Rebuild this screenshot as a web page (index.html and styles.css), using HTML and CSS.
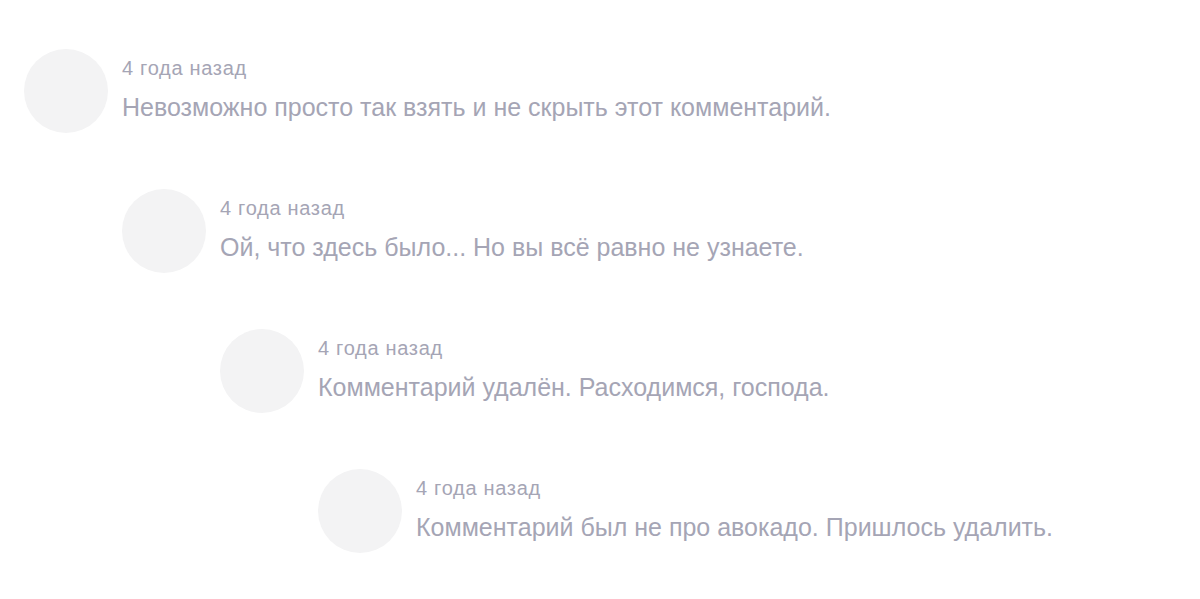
FILE: index.html
```html
<!DOCTYPE html>
<html lang="ru">
<head>
  <meta charset="UTF-8">
  <title>Комментарии</title>
  <link rel="stylesheet" href="styles.css">
</head>
<body>
  <div id="comments">
    <div class="comment level-0">
      <div class="avatar"></div>
      <div class="comment-body">
        <div class="comment-date">4 года назад</div>
        <div class="comment-text">Невозможно просто так взять и не скрыть этот комментарий.</div>
      </div>
    </div>
    <div class="comment level-1">
      <div class="avatar"></div>
      <div class="comment-body">
        <div class="comment-date">4 года назад</div>
        <div class="comment-text">Ой, что здесь было... Но вы всё равно не узнаете.</div>
      </div>
    </div>
    <div class="comment level-2">
      <div class="avatar"></div>
      <div class="comment-body">
        <div class="comment-date">4 года назад</div>
        <div class="comment-text">Комментарий удалён. Расходимся, господа.</div>
      </div>
    </div>
    <div class="comment level-3">
      <div class="avatar"></div>
      <div class="comment-body">
        <div class="comment-date">4 года назад</div>
        <div class="comment-text">Комментарий был не про авокадо. Пришлось удалить.</div>
      </div>
    </div>
  </div>
</body>
</html>
```

FILE: styles.css
```css
/* Page */
body {
  margin: 0;
  padding: 0;
  background-color: #fff;
  font-family: "Liberation Sans", Arial, sans-serif;
}
/* Comment thread */
#comments {
  display: flex;
  flex-direction: column;
  gap: 56px;
  padding: 49px 0 0 24px;
}
.comment {
  display: flex;
  align-items: flex-start;
  gap: 14px;
}
.level-1 { margin-left: 98px; }
.level-2 { margin-left: 196px; }
.level-3 { margin-left: 294px; }
.avatar {
  width: 84px;
  height: 84px;
  border-radius: 50%;
  background-color: #f3f3f4;
  flex-shrink: 0;
}
.comment-body {
  padding-top: 7px;
  color: #a5a5b5;
}
.comment-date {
  font-size: 20px;
  line-height: 24px;
  letter-spacing: 0.7px;
}
.comment-text {
  margin-top: 12px;
  font-size: 25px;
  line-height: 30px;
}
```
